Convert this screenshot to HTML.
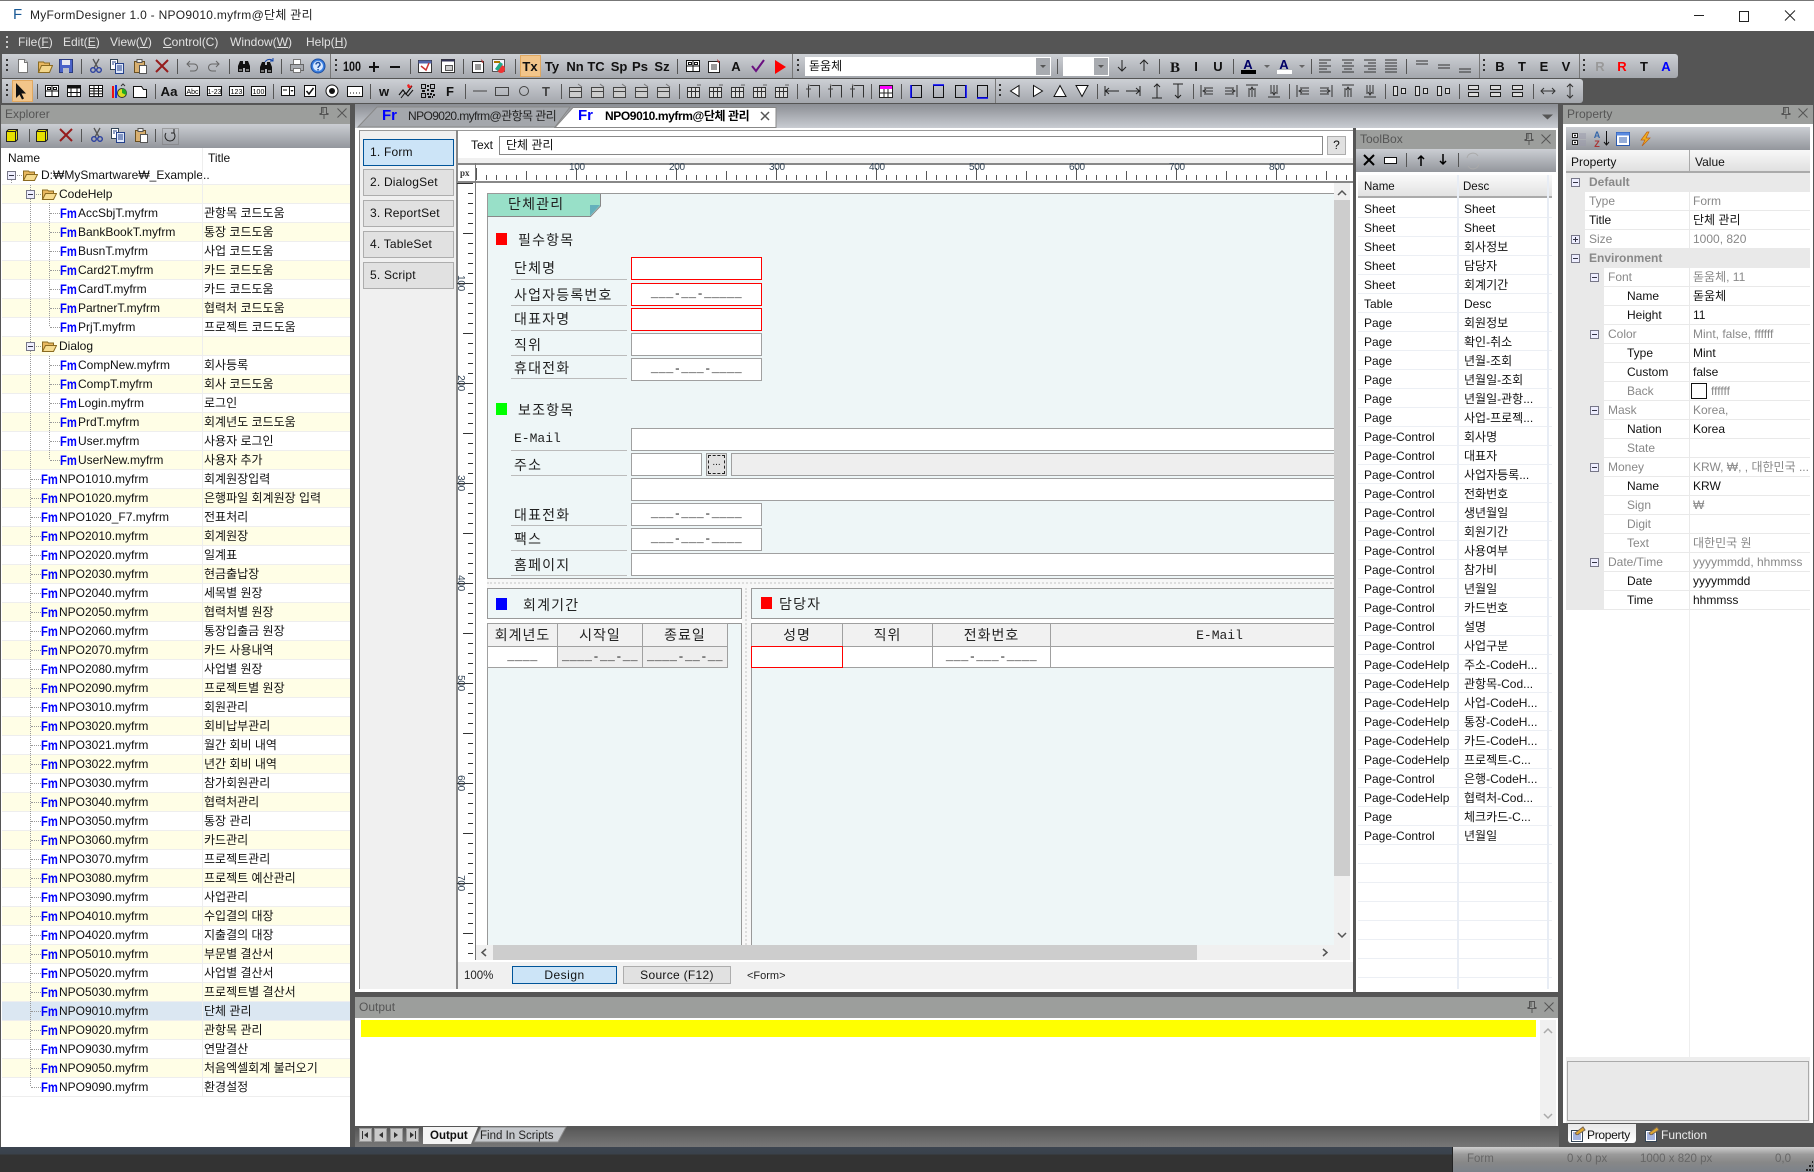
<!DOCTYPE html>
<html><head><meta charset="utf-8"><title>MyFormDesigner</title>
<style>
html,body{margin:0;padding:0}
body{width:1814px;height:1172px;position:relative;overflow:hidden;background:#555;font:12px "Liberation Sans","Noto Sans CJK KR",sans-serif;color:#111}
.a{position:absolute}
.tb{position:absolute;background:#9c9e9c;color:#555;line-height:19px;padding-left:4px;box-sizing:border-box}
.gr{position:absolute;background:linear-gradient(#cbced3,#93969c)}
.menu{position:absolute;top:35px;color:#e2e2e2;line-height:15px}
.r{height:19px;position:relative;box-sizing:border-box;border-bottom:1px solid #eee;line-height:18px;white-space:nowrap}
.r:nth-child(even){background:#fffee6}
.r.sel{background:#dbe7f2}
.r::after{content:"";position:absolute;left:202px;top:0;height:19px;width:1px;background:#eee}
.r b{position:absolute;color:#00f;font:bold 14px/18px "Liberation Sans",sans-serif;transform:scaleX(.8);transform-origin:0 0}
.r .n{position:absolute}
.r .t{position:absolute;left:204px}
.r i{position:absolute;top:9px;width:10px;border-top:1px dotted #999}
.l0 .n{left:41px}.f .n{left:59px}
.l1 b{left:41px}.l1 .n{left:59px}.l1 i{left:31px}
.l2 b{left:60px}.l2 .n{left:78px}.l2 i{left:50px}
.btn{position:absolute;box-sizing:border-box;background:#e1e1e1;border:1px solid #adadad;text-align:center}
.lt{left:363px;width:91px;height:27px;line-height:25px;text-align:left;padding-left:6px;font-size:12px;letter-spacing:.2px}
.on{background:#cce4f7;border-color:#005499}
.rl{position:absolute;font:10px/10px "Liberation Sans",sans-serif;color:#345;letter-spacing:-.3px}
.fld{position:absolute;box-sizing:border-box;background:#fff;border:1px solid #a0a0a0;text-align:center;font:12px/21px "Liberation Mono",monospace;letter-spacing:.4px;white-space:nowrap;overflow:hidden}
.red{border-color:#f00}
.dis{background:#eee}
.ln{position:absolute;height:1px;background:#bbb;left:511px;width:116px}
.lb{position:absolute;font:14px/20px "Liberation Sans","Noto Sans CJK KR",sans-serif;letter-spacing:1.2px;color:#222;white-space:nowrap}
.sq{position:absolute;width:11px;height:12px}
.hd{position:absolute;box-sizing:border-box;background:#f1f1f1;border:1px solid #a0a0a0;border-left:0;text-align:center;font:14px/23px "Liberation Sans","Noto Sans CJK KR",sans-serif;letter-spacing:1px;color:#222;height:24px;white-space:nowrap}
.tr{height:19px;position:relative;line-height:18px;white-space:nowrap}
.tr span{position:absolute;left:6px}
.tr em{position:absolute;left:106px;font-style:normal}
.p{position:relative;height:19px;background:#e9e9e9;line-height:18px;white-space:nowrap}
.p::before{content:"";position:absolute;top:0;height:18px;right:0;left:38px;background:#fff}
.p.a1::before{left:19px}
.p.g::before{display:none}
.p::after{content:"";position:absolute;left:123px;top:0;height:19px;width:1px;background:#e9e9e9}
.p.g::after{display:none}
.p span{position:absolute;left:42px}
.p.a1 span{left:23px}
.p.a3 span{left:61px}
.p.g span{left:23px;font-weight:bold;color:#888}
.p em{position:absolute;left:127px;font-style:normal}
.d span,.d em{color:#888}
.p.e span{color:#111}
.p.k em{color:#888}
.s{font-family:"Liberation Sans","Noto Sans CJK KR",sans-serif}
.tt{font:bold 13px "Liberation Sans",sans-serif;fill:#111;text-anchor:middle}
</style></head><body>

<!-- title bar -->
<div class="a" style="left:0;top:0;width:1814px;height:31px;background:#fff;border-top:1px solid #777;box-sizing:border-box"></div>
<div class="a" style="left:13px;top:6px;font:15px/18px 'Liberation Sans',sans-serif;color:#1a5a96">F</div>
<div class="a" style="left:30px;top:7px;line-height:16px;color:#222;white-space:nowrap;letter-spacing:.28px">MyFormDesigner 1.0 - NPO9010.myfrm@단체 관리</div>

<!-- menu -->
<div class="menu" style="left:18px">File(<u>F</u>)</div>
<div class="menu" style="left:63px">Edit(<u>E</u>)</div>
<div class="menu" style="left:110px">View(<u>V</u>)</div>
<div class="menu" style="left:163px"><u>C</u>ontrol(C)</div>
<div class="menu" style="left:230px">Window(<u>W</u>)</div>
<div class="menu" style="left:306px">Help(<u>H</u>)</div>

<!-- toolbars -->
<div class="a" style="left:2px;top:54px;width:1676px;height:24px;background:linear-gradient(#cdd0d5,#a4a7ad);border-radius:0 3px 3px 0"></div>
<div class="a" style="left:2px;top:79px;width:1581px;height:24px;background:linear-gradient(#cdd0d5,#a4a7ad);border-radius:0 3px 3px 0"></div>

<!-- Explorer -->
<div class="a" style="left:1px;top:105px;width:349px;height:1042px;background:#fff"></div>
<div class="tb" style="left:1px;top:105px;width:349px;height:19px">Explorer</div>
<div class="gr" style="left:1px;top:124px;width:349px;height:24px"></div>
<div class="a" style="left:8px;top:150px;line-height:16px">Name</div>
<div class="a" style="left:208px;top:150px;line-height:16px">Title</div>
<div class="a" style="left:202px;top:148px;width:1px;height:18px;background:#eee"></div>
<div class="a" style="left:0;top:166px;width:350px;clip-path:inset(0 0 0 2px)">
<div class="r l0"><span class="n">D:₩MySmartware₩_Example..</span></div>
<div class="r f"><span class="n">CodeHelp</span></div>
<div class="r l2"><i></i><b>Fm</b><span class="n">AccSbjT.myfrm</span><span class="t">관항목 코드도움</span></div>
<div class="r l2"><i></i><b>Fm</b><span class="n">BankBookT.myfrm</span><span class="t">통장 코드도움</span></div>
<div class="r l2"><i></i><b>Fm</b><span class="n">BusnT.myfrm</span><span class="t">사업 코드도움</span></div>
<div class="r l2"><i></i><b>Fm</b><span class="n">Card2T.myfrm</span><span class="t">카드 코드도움</span></div>
<div class="r l2"><i></i><b>Fm</b><span class="n">CardT.myfrm</span><span class="t">카드 코드도움</span></div>
<div class="r l2"><i></i><b>Fm</b><span class="n">PartnerT.myfrm</span><span class="t">협력처 코드도움</span></div>
<div class="r l2"><i></i><b>Fm</b><span class="n">PrjT.myfrm</span><span class="t">프로젝트 코드도움</span></div>
<div class="r f"><span class="n">Dialog</span></div>
<div class="r l2"><i></i><b>Fm</b><span class="n">CompNew.myfrm</span><span class="t">회사등록</span></div>
<div class="r l2"><i></i><b>Fm</b><span class="n">CompT.myfrm</span><span class="t">회사 코드도움</span></div>
<div class="r l2"><i></i><b>Fm</b><span class="n">Login.myfrm</span><span class="t">로그인</span></div>
<div class="r l2"><i></i><b>Fm</b><span class="n">PrdT.myfrm</span><span class="t">회계년도 코드도움</span></div>
<div class="r l2"><i></i><b>Fm</b><span class="n">User.myfrm</span><span class="t">사용자 로그인</span></div>
<div class="r l2"><i></i><b>Fm</b><span class="n">UserNew.myfrm</span><span class="t">사용자 추가</span></div>
<div class="r l1"><i></i><b>Fm</b><span class="n">NPO1010.myfrm</span><span class="t">회계원장입력</span></div>
<div class="r l1"><i></i><b>Fm</b><span class="n">NPO1020.myfrm</span><span class="t">은행파일 회계원장 입력</span></div>
<div class="r l1"><i></i><b>Fm</b><span class="n">NPO1020_F7.myfrm</span><span class="t">전표처리</span></div>
<div class="r l1"><i></i><b>Fm</b><span class="n">NPO2010.myfrm</span><span class="t">회계원장</span></div>
<div class="r l1"><i></i><b>Fm</b><span class="n">NPO2020.myfrm</span><span class="t">일계표</span></div>
<div class="r l1"><i></i><b>Fm</b><span class="n">NPO2030.myfrm</span><span class="t">현금출납장</span></div>
<div class="r l1"><i></i><b>Fm</b><span class="n">NPO2040.myfrm</span><span class="t">세목별 원장</span></div>
<div class="r l1"><i></i><b>Fm</b><span class="n">NPO2050.myfrm</span><span class="t">협력처별 원장</span></div>
<div class="r l1"><i></i><b>Fm</b><span class="n">NPO2060.myfrm</span><span class="t">통장입출금 원장</span></div>
<div class="r l1"><i></i><b>Fm</b><span class="n">NPO2070.myfrm</span><span class="t">카드 사용내역</span></div>
<div class="r l1"><i></i><b>Fm</b><span class="n">NPO2080.myfrm</span><span class="t">사업별 원장</span></div>
<div class="r l1"><i></i><b>Fm</b><span class="n">NPO2090.myfrm</span><span class="t">프로젝트별 원장</span></div>
<div class="r l1"><i></i><b>Fm</b><span class="n">NPO3010.myfrm</span><span class="t">회원관리</span></div>
<div class="r l1"><i></i><b>Fm</b><span class="n">NPO3020.myfrm</span><span class="t">회비납부관리</span></div>
<div class="r l1"><i></i><b>Fm</b><span class="n">NPO3021.myfrm</span><span class="t">월간 회비 내역</span></div>
<div class="r l1"><i></i><b>Fm</b><span class="n">NPO3022.myfrm</span><span class="t">년간 회비 내역</span></div>
<div class="r l1"><i></i><b>Fm</b><span class="n">NPO3030.myfrm</span><span class="t">참가회원관리</span></div>
<div class="r l1"><i></i><b>Fm</b><span class="n">NPO3040.myfrm</span><span class="t">협력처관리</span></div>
<div class="r l1"><i></i><b>Fm</b><span class="n">NPO3050.myfrm</span><span class="t">통장 관리</span></div>
<div class="r l1"><i></i><b>Fm</b><span class="n">NPO3060.myfrm</span><span class="t">카드관리</span></div>
<div class="r l1"><i></i><b>Fm</b><span class="n">NPO3070.myfrm</span><span class="t">프로젝트관리</span></div>
<div class="r l1"><i></i><b>Fm</b><span class="n">NPO3080.myfrm</span><span class="t">프로젝트 예산관리</span></div>
<div class="r l1"><i></i><b>Fm</b><span class="n">NPO3090.myfrm</span><span class="t">사업관리</span></div>
<div class="r l1"><i></i><b>Fm</b><span class="n">NPO4010.myfrm</span><span class="t">수입결의 대장</span></div>
<div class="r l1"><i></i><b>Fm</b><span class="n">NPO4020.myfrm</span><span class="t">지출결의 대장</span></div>
<div class="r l1"><i></i><b>Fm</b><span class="n">NPO5010.myfrm</span><span class="t">부문별 결산서</span></div>
<div class="r l1"><i></i><b>Fm</b><span class="n">NPO5020.myfrm</span><span class="t">사업별 결산서</span></div>
<div class="r l1"><i></i><b>Fm</b><span class="n">NPO5030.myfrm</span><span class="t">프로젝트별 결산서</span></div>
<div class="r l1 sel"><i></i><b>Fm</b><span class="n">NPO9010.myfrm</span><span class="t">단체 관리</span></div>
<div class="r l1"><i></i><b>Fm</b><span class="n">NPO9020.myfrm</span><span class="t">관항목 관리</span></div>
<div class="r l1"><i></i><b>Fm</b><span class="n">NPO9030.myfrm</span><span class="t">연말결산</span></div>
<div class="r l1"><i></i><b>Fm</b><span class="n">NPO9050.myfrm</span><span class="t">처음엑셀회계 불러오기</span></div>
<div class="r l1"><i></i><b>Fm</b><span class="n">NPO9090.myfrm</span><span class="t">환경설정</span></div>
</div>

<!-- center document -->
<div class="a" style="left:355px;top:104px;width:1203px;height:24px;background:linear-gradient(#8b8e94,#c9ccd2)"></div>
<svg class="a" style="left:355px;top:104px" width="430" height="24"><polygon points="3,23 22,3 215,3 200,23" fill="#a4a7ac" stroke="#888"/><polygon points="200,23.5 218,3.5 421,3.5 421,23.5" fill="#fff" stroke="#888"/></svg>
<div class="a" style="left:382px;top:107px;font:bold 15px/18px 'Liberation Sans',sans-serif;color:#00f">Fr</div>
<div class="a" style="left:408px;top:108px;line-height:16px;color:#222;white-space:nowrap;letter-spacing:-.6px">NPO9020.myfrm@관항목 관리</div>
<div class="a" style="left:578px;top:107px;font:bold 15px/18px 'Liberation Sans',sans-serif;color:#00f">Fr</div>
<div class="a" style="left:605px;top:108px;line-height:16px;color:#000;white-space:nowrap;font-weight:bold;letter-spacing:-.4px">NPO9010.myfrm@단체 관리</div>

<div class="a" style="left:355px;top:128px;width:998px;height:864px;background:#fff"></div>
<div class="a" style="left:359px;top:130px;width:97px;height:859px;background:#f0f0f0;border-left:1px solid #888;border-top:1px solid #999;box-sizing:border-box"></div>
<div class="a" style="left:456px;top:130px;width:2px;height:859px;background:#888"></div>
<div class="a" style="left:458px;top:130px;width:895px;height:1px;background:#999"></div>
<div class="a" style="left:458px;top:158px;width:895px;height:5px;background:#f0f0f0"></div>
<div class="btn lt on" style="top:139px">1. Form</div>
<div class="btn lt" style="top:169px">2. DialogSet</div>
<div class="btn lt" style="top:200px">3. ReportSet</div>
<div class="btn lt" style="top:231px">4. TableSet</div>
<div class="btn lt" style="top:262px">5. Script</div>
<div class="a" style="left:471px;top:137px;line-height:16px">Text</div>
<div class="a" style="left:499px;top:136px;width:824px;height:19px;box-sizing:border-box;border:1px solid #888;background:#fff;padding-left:6px;line-height:17px">단체 관리</div>
<div class="btn" style="left:1327px;top:136px;width:19px;height:19px;line-height:17px">?</div>

<!-- rulers -->
<div class="a" style="left:456px;top:163px;width:897px;height:2px;background:#888"></div>
<div class="a" style="left:456px;top:181px;width:897px;height:2px;background:#888"></div>
<div class="a" style="left:475px;top:163px;width:1px;height:797px;background:#777"></div>
<div class="a" style="left:460px;top:168px;font:bold 9px/10px 'Liberation Serif',serif;color:#333">px</div>
<div class="a" style="left:476px;top:165px;width:872px;height:15px;background-image:linear-gradient(90deg,#555 1px,transparent 1px),linear-gradient(90deg,#555 1px,transparent 1px),linear-gradient(90deg,#555 1px,transparent 1px);background-size:10px 5px,50px 9px,100px 12px;background-position:0 100%;background-repeat:repeat-x"></div>
<div class="rl" style="left:569px;top:163px">100</div><div class="rl" style="left:669px;top:163px">200</div><div class="rl" style="left:769px;top:163px">300</div><div class="rl" style="left:869px;top:163px">400</div><div class="rl" style="left:969px;top:163px">500</div><div class="rl" style="left:1069px;top:163px">600</div><div class="rl" style="left:1169px;top:163px">700</div><div class="rl" style="left:1269px;top:163px">800</div>
<div class="a" style="left:456px;top:183px;width:17px;height:777px;background-image:linear-gradient(#333 1px,transparent 1px),linear-gradient(#333 1px,transparent 1px),linear-gradient(#333 1px,transparent 1px);background-size:5px 10px,10px 50px,16px 100px;background-position:100% 0;background-repeat:repeat-y"></div>
<div class="rl" style="left:452px;top:278px;transform:rotate(90deg)">100</div><div class="rl" style="left:452px;top:378px;transform:rotate(90deg)">200</div><div class="rl" style="left:452px;top:478px;transform:rotate(90deg)">300</div><div class="rl" style="left:452px;top:578px;transform:rotate(90deg)">400</div><div class="rl" style="left:452px;top:678px;transform:rotate(90deg)">500</div><div class="rl" style="left:452px;top:778px;transform:rotate(90deg)">600</div><div class="rl" style="left:452px;top:878px;transform:rotate(90deg)">700</div>

<!-- form canvas clipped -->
<div class="a" style="left:0;top:0;width:1814px;height:1172px;clip-path:inset(183px 480px 227px 476px)">
<div class="a" style="left:487px;top:193px;width:900px;height:386px;background:#eef6f7;border:1px solid #999;box-sizing:border-box"></div>
<svg class="a" style="left:487px;top:194px" width="115" height="24"><polygon points="1,0 113,0 113,12 103,22 1,22" fill="#98e0c8"/><polygon points="103,11 113,11 103,22" fill="#64b0bc"/><path d="M113.500 0V12L103.500 22.500H0" fill="none" stroke="#888"/></svg>
<div class="lb" style="left:508px;top:193px;font-size:14px;line-height:23px">단체관리</div>

<div class="sq" style="left:496px;top:233px;background:#f00"></div>
<div class="lb" style="left:518px;top:230px">필수항목</div>
<div class="lb" style="left:514px;top:258px">단체명</div><div class="ln" style="top:279px"></div>
<div class="fld red" style="left:631px;top:257px;width:131px;height:23px"></div>
<div class="lb" style="left:514px;top:285px">사업자등록번호</div><div class="ln" style="top:305px"></div>
<div class="fld red" style="left:631px;top:283px;width:131px;height:23px">___-__-_____</div>
<div class="lb" style="left:514px;top:309px">대표자명</div><div class="ln" style="top:330px"></div>
<div class="fld red" style="left:631px;top:308px;width:131px;height:23px"></div>
<div class="lb" style="left:514px;top:335px">직위</div><div class="ln" style="top:355px"></div>
<div class="fld" style="left:631px;top:333px;width:131px;height:23px"></div>
<div class="lb" style="left:514px;top:358px">휴대전화</div><div class="ln" style="top:378px"></div>
<div class="fld" style="left:631px;top:358px;width:131px;height:23px">___-___-____</div>

<div class="sq" style="left:496px;top:403px;background:#0f0"></div>
<div class="lb" style="left:518px;top:400px">보조항목</div>
<div class="lb" style="left:514px;top:429px;font-family:'Liberation Mono',monospace;font-size:13px;letter-spacing:0">E-Mail</div><div class="ln" style="top:450px"></div>
<div class="fld" style="left:631px;top:428px;width:800px;height:23px"></div>
<div class="lb" style="left:514px;top:455px">주소</div><div class="ln" style="top:475px"></div>
<div class="fld" style="left:631px;top:453px;width:71px;height:23px"></div>
<div class="btn" style="left:706px;top:453px;width:21px;height:23px;line-height:18px;background:#e1e1e1;border-color:#999;outline:1px dashed #222;outline-offset:-3px;font-size:10px">...</div>
<div class="fld dis" style="left:731px;top:453px;width:700px;height:23px"></div>
<div class="fld" style="left:631px;top:478px;width:800px;height:23px"></div>
<div class="lb" style="left:514px;top:505px">대표전화</div><div class="ln" style="top:525px"></div>
<div class="fld" style="left:631px;top:503px;width:131px;height:23px">___-___-____</div>
<div class="lb" style="left:514px;top:529px">팩스</div><div class="ln" style="top:550px"></div>
<div class="fld" style="left:631px;top:528px;width:131px;height:23px">___-___-____</div>
<div class="lb" style="left:514px;top:555px">홈페이지</div><div class="ln" style="top:575px"></div>
<div class="fld" style="left:631px;top:553px;width:800px;height:23px"></div>

<div class="a" style="left:487px;top:579px;width:900px;height:9px;background:#f7f7f7;border-top:0"></div>
<div class="a" style="left:487px;top:582px;width:900px;border-top:2px dotted #ddd"></div>
<div class="a" style="left:742px;top:588px;width:9px;height:360px;background:#f7f7f7"></div>
<div class="a" style="left:745px;top:588px;height:360px;border-left:2px dotted #ddd"></div>

<div class="a" style="left:487px;top:588px;width:255px;height:31px;background:#eef6f7;border:1px solid #999;box-sizing:border-box"></div>
<div class="sq" style="left:496px;top:598px;background:#00f"></div>
<div class="lb" style="left:523px;top:595px">회계기간</div>
<div class="a" style="left:751px;top:588px;width:700px;height:31px;background:#eef6f7;border:1px solid #999;box-sizing:border-box"></div>
<div class="sq" style="left:761px;top:597px;background:#f00"></div>
<div class="lb" style="left:779px;top:594px">담당자</div>

<div class="a" style="left:487px;top:623px;width:255px;height:330px;background:#eef6f7;border:1px solid #999;box-sizing:border-box"></div>
<div class="a" style="left:751px;top:623px;width:700px;height:330px;background:#eef6f7;border:1px solid #999;box-sizing:border-box"></div>

<div class="hd" style="left:487px;top:623px;width:71px;border-left:1px solid #a0a0a0">회계년도</div>
<div class="hd" style="left:558px;top:623px;width:85px">시작일</div>
<div class="hd" style="left:643px;top:623px;width:85px">종료일</div>
<div class="fld" style="left:487px;top:646px;width:71px;height:22px;line-height:20px">____</div>
<div class="fld dis" style="left:557px;top:646px;width:86px;height:22px;line-height:20px">____-__-__</div>
<div class="fld dis" style="left:642px;top:646px;width:86px;height:22px;line-height:20px">____-__-__</div>

<div class="hd" style="left:751px;top:623px;width:92px;border-left:1px solid #a0a0a0">성명</div>
<div class="hd" style="left:843px;top:623px;width:90px">직위</div>
<div class="hd" style="left:933px;top:623px;width:118px">전화번호</div>
<div class="hd" style="left:1051px;top:623px;width:338px;font-family:'Liberation Mono',monospace;font-size:13px;letter-spacing:0">E-Mail</div>
<div class="fld" style="left:842px;top:646px;width:91px;height:22px"></div>
<div class="fld" style="left:932px;top:646px;width:119px;height:22px;line-height:20px">___-___-____</div>
<div class="fld" style="left:1050px;top:646px;width:339px;height:22px"></div>
<div class="fld red" style="left:751px;top:646px;width:92px;height:22px"></div>
</div>

<!-- form scrollbars -->
<div class="a" style="left:1334px;top:183px;width:16px;height:762px;background:#f0f0f0"></div>
<div class="a" style="left:1334px;top:200px;width:16px;height:676px;background:#cdcdcd"></div>
<div class="a" style="left:476px;top:945px;width:874px;height:15px;background:#f0f0f0"></div>
<div class="a" style="left:493px;top:945px;width:704px;height:15px;background:#cdcdcd"></div>
<div class="a" style="left:458px;top:962px;width:895px;height:27px;background:#f0f0f0"></div>
<div class="a" style="left:464px;top:968px;line-height:16px;font-size:11.500px;color:#222">100%</div>
<div class="btn on" style="left:512px;top:966px;width:105px;height:18px;line-height:16px;letter-spacing:.5px">Design</div>
<div class="btn" style="left:623px;top:966px;width:108px;height:18px;line-height:16px;letter-spacing:.3px">Source (F12)</div>
<div class="a" style="left:747px;top:968px;line-height:16px;font-size:11px;color:#222">&lt;Form&gt;</div>

<!-- toolbox -->
<div class="a" style="left:1353px;top:128px;width:3px;height:862px;background:#555"></div>
<div class="a" style="left:1356px;top:128px;width:202px;height:864px;background:#fff"></div>
<div class="tb" style="left:1356px;top:130px;width:200px;height:19px">ToolBox</div>
<div class="gr" style="left:1356px;top:149px;width:200px;height:23px"></div>
<div class="a" style="left:1358px;top:175px;width:194px;height:23px;background:linear-gradient(#fafafa,#e2e2e2);border-bottom:2px solid #aaa;box-sizing:border-box"></div>
<div class="a" style="left:1364px;top:179px;line-height:17px;font-size:11.500px">Name</div>
<div class="a" style="left:1463px;top:179px;line-height:17px;font-size:11.500px">Desc</div>
<div class="a" style="left:1358px;top:199px;width:194px;height:790px;background:repeating-linear-gradient(#fff 0 18px,#eceff4 18px 19px)"></div>
<div class="a" style="left:1457px;top:175px;width:2px;height:814px;background:#e8edf5"></div>
<div class="a" style="left:1547px;top:175px;width:2px;height:814px;background:#e8edf5"></div>
<div class="a" style="left:1358px;top:200px;width:194px">
<div class="tr"><span>Sheet</span><em>Sheet</em></div>
<div class="tr"><span>Sheet</span><em>Sheet</em></div>
<div class="tr"><span>Sheet</span><em>회사정보</em></div>
<div class="tr"><span>Sheet</span><em>담당자</em></div>
<div class="tr"><span>Sheet</span><em>회계기간</em></div>
<div class="tr"><span>Table</span><em>Desc</em></div>
<div class="tr"><span>Page</span><em>회원정보</em></div>
<div class="tr"><span>Page</span><em>확인-취소</em></div>
<div class="tr"><span>Page</span><em>년월-조회</em></div>
<div class="tr"><span>Page</span><em>년월일-조회</em></div>
<div class="tr"><span>Page</span><em>년월일-관항...</em></div>
<div class="tr"><span>Page</span><em>사업-프로젝...</em></div>
<div class="tr"><span>Page-Control</span><em>회사명</em></div>
<div class="tr"><span>Page-Control</span><em>대표자</em></div>
<div class="tr"><span>Page-Control</span><em>사업자등록...</em></div>
<div class="tr"><span>Page-Control</span><em>전화번호</em></div>
<div class="tr"><span>Page-Control</span><em>생년월일</em></div>
<div class="tr"><span>Page-Control</span><em>회원기간</em></div>
<div class="tr"><span>Page-Control</span><em>사용여부</em></div>
<div class="tr"><span>Page-Control</span><em>참가비</em></div>
<div class="tr"><span>Page-Control</span><em>년월일</em></div>
<div class="tr"><span>Page-Control</span><em>카드번호</em></div>
<div class="tr"><span>Page-Control</span><em>설명</em></div>
<div class="tr"><span>Page-Control</span><em>사업구분</em></div>
<div class="tr"><span>Page-CodeHelp</span><em>주소-CodeH...</em></div>
<div class="tr"><span>Page-CodeHelp</span><em>관항목-Cod...</em></div>
<div class="tr"><span>Page-CodeHelp</span><em>사업-CodeH...</em></div>
<div class="tr"><span>Page-CodeHelp</span><em>통장-CodeH...</em></div>
<div class="tr"><span>Page-CodeHelp</span><em>카드-CodeH...</em></div>
<div class="tr"><span>Page-CodeHelp</span><em>프로젝트-C...</em></div>
<div class="tr"><span>Page-Control</span><em>은행-CodeH...</em></div>
<div class="tr"><span>Page-CodeHelp</span><em>협력처-Cod...</em></div>
<div class="tr"><span>Page</span><em>체크카드-C...</em></div>
<div class="tr"><span>Page-Control</span><em>년월일</em></div>
</div>

<!-- Property -->
<div class="a" style="left:1563px;top:105px;width:250px;height:1018px;background:#fff"></div>
<div class="tb" style="left:1563px;top:105px;width:250px;height:19px">Property</div>
<div class="gr" style="left:1566px;top:127px;width:244px;height:23px"></div>
<div class="a" style="left:1566px;top:150px;width:244px;height:23px;background:linear-gradient(#f8f8f8,#e0e0e0);border-bottom:2px solid #aaa;box-sizing:border-box"></div>
<div class="a" style="left:1571px;top:154px;line-height:16px">Property</div>
<div class="a" style="left:1695px;top:154px;line-height:16px">Value</div>
<div class="a" style="left:1689px;top:150px;width:1px;height:23px;background:#aaa"></div>
<div class="a" style="left:1566px;top:173px;width:244px">
<div class="p g"><span>Default</span></div>
<div class="p a1 d"><span>Type</span><em>Form</em></div>
<div class="p a1"><span>Title</span><em>단체 관리</em></div>
<div class="p a1 d"><span>Size</span><em>1000, 820</em></div>
<div class="p g"><span>Environment</span></div>
<div class="p a2 d"><span>Font</span><em>돋움체, 11</em></div>
<div class="p a3"><span>Name</span><em>돋움체</em></div>
<div class="p a3"><span>Height</span><em>11</em></div>
<div class="p a2 d"><span>Color</span><em>Mint, false, ffffff</em></div>
<div class="p a3"><span>Type</span><em>Mint</em></div>
<div class="p a3"><span>Custom</span><em>false</em></div>
<div class="p a3 d"><span>Back</span><em style="left:145px">ffffff</em><i class="a" style="left:125px;top:1px;width:14px;height:14px;border:1px solid #111;background:#fff"></i></div>
<div class="p a2 d"><span>Mask</span><em>Korea,</em></div>
<div class="p a3"><span>Nation</span><em>Korea</em></div>
<div class="p a3 d"><span>State</span></div>
<div class="p a2 d"><span>Money</span><em>KRW, ₩, , 대한민국 ...</em></div>
<div class="p a3"><span>Name</span><em>KRW</em></div>
<div class="p a3 d"><span>Sign</span><em>₩</em></div>
<div class="p a3 d"><span>Digit</span></div>
<div class="p a3 d"><span>Text</span><em>대한민국 원</em></div>
<div class="p a2 d"><span>Date/Time</span><em>yyyymmdd, hhmmss</em></div>
<div class="p a3"><span>Date</span><em>yyyymmdd</em></div>
<div class="p a3"><span>Time</span><em>hhmmss</em></div>
</div>
<div class="a" style="left:1689px;top:610px;width:1px;height:447px;background:#eee"></div>
<div class="a" style="left:1566px;top:1057px;width:244px;height:66px;background:#eee"></div>
<div class="a" style="left:1567px;top:1061px;width:242px;height:60px;box-sizing:border-box;background:#e9e9e9;border:1px solid #aaa"></div>
<div class="a" style="left:1568px;top:1124px;width:68px;height:19px;background:linear-gradient(#e8e8e8,#fff);border-radius:0 0 3px 3px"></div>
<div class="a" style="left:1587px;top:1127px;line-height:16px;color:#111;letter-spacing:-.3px">Property</div>
<div class="a" style="left:1661px;top:1127px;line-height:16px;color:#eee">Function</div>

<!-- Output -->
<div class="a" style="left:355px;top:992px;width:1208px;height:5px;background:#555"></div>
<div class="a" style="left:355px;top:997px;width:1203px;height:129px;background:#fff"></div>
<div class="tb" style="left:355px;top:997px;width:1203px;height:21px;line-height:20px;padding-left:4px">Output</div>
<div class="a" style="left:361px;top:1020px;width:1175px;height:17px;background:#ff0"></div>
<div class="a" style="left:1540px;top:1020px;width:16px;height:106px;background:#f0f0f0"></div>
<div class="a" style="left:355px;top:1126px;width:1204px;height:21px;background:linear-gradient(#555,#777)"></div>
<svg class="a" style="left:423px;top:1126px" width="150" height="20"><polygon points="51,16 58,1 143,1 135,16" fill="#c5c8cc" stroke="#888"/><polygon points="0,1 55,1 48,18 0,18" fill="#f4f4f4"/></svg>
<div class="a" style="left:430px;top:1128px;line-height:16px;font-weight:bold;font-size:11.500px;color:#111">Output</div>
<div class="a" style="left:480px;top:1128px;line-height:16px;font-size:11.500px;color:#222">Find In Scripts</div>

<!-- bottom status -->
<div class="a" style="left:0;top:1147px;width:1452px;height:25px;background:linear-gradient(#3c4550 0,#3a424c 7px,#333 8px)"></div>
<div class="a" style="left:1452px;top:1147px;width:362px;height:25px;background:linear-gradient(#cfcfcf,#9a9a9a 30%,#888 60%,#7c828a);border-left:1px solid #222;box-sizing:border-box"></div>
<div class="a" style="left:1467px;top:1151px;line-height:16px;color:#666;font-size:11.500px">Form</div>
<div class="a" style="left:1567px;top:1151px;line-height:16px;color:#666;font-size:11.500px">0 x 0 px</div>
<div class="a" style="left:1640px;top:1151px;line-height:16px;color:#666;font-size:11.500px">1000 x 820 px</div>
<div class="a" style="left:1775px;top:1151px;line-height:16px;color:#666;font-size:11.500px">0,0</div>

<!-- icon overlay -->
<svg class="a" style="left:0;top:0" width="1814" height="1172" viewBox="0 0 1814 1172">
<defs>
<symbol id="new" viewBox="0 0 16 16"><path d="M3.500 1.500h6l3 3v10h-9z" fill="#fff" stroke="#777"/><path d="M9.500 1.500v3h3" fill="#ddd" stroke="#777"/></symbol>
<symbol id="open" viewBox="0 0 16 16"><path d="M1.500 14V4h5l1 1h5v3" fill="#e8b860" stroke="#8a6a20"/><path d="M1.500 14.500l3-7h11l-3 7z" fill="#f3d68a" stroke="#8a6a20"/></symbol>
<symbol id="save" viewBox="0 0 16 16"><path d="M1.500 1.500h13v13h-13z" fill="#4a62c8" stroke="#2a3a80"/><rect x="4" y="2" width="8" height="5" fill="#e8e8f0"/><rect x="5" y="10" width="6" height="5" fill="#b8bcc8"/></symbol>
<symbol id="cut" viewBox="0 0 16 16"><path d="M5 1l5 9M11 1l-5 9" stroke="#555" fill="none" stroke-width="1.300"/><circle cx="5" cy="12" r="2.300" fill="none" stroke="#2a3fa0" stroke-width="1.400"/><circle cx="11" cy="12" r="2.300" fill="none" stroke="#2a3fa0" stroke-width="1.400"/></symbol>
<symbol id="copy" viewBox="0 0 16 16"><path d="M1.500 1.500h7v10h-7z" fill="#fff" stroke="#345"/><path d="M6.500 5.500h8v10h-8z" fill="#dfe8fa" stroke="#23408a"/><path d="M8 8h5M8 10h5M8 12h5M3 4h4M3 6h2" stroke="#23408a"/></symbol>
<symbol id="paste" viewBox="0 0 16 16"><path d="M2.500 3.500h10v11h-10z" fill="#d9b070" stroke="#6a5020"/><path d="M5 1.500h5v3H5z" fill="#eee" stroke="#555"/><path d="M7.500 7.500h7v8h-7z" fill="#fff" stroke="#555"/></symbol>
<symbol id="xred" viewBox="0 0 16 16"><path d="M2 2l12 12M14 2L2 14" stroke="#961c1c" stroke-width="2" fill="none"/></symbol>
<symbol id="undo" viewBox="0 0 16 16"><path d="M3 6h7a3.500 3.500 0 0 1 0 7H6M6 3L3 6l3 3" stroke="#666" fill="none"/></symbol>
<symbol id="redo" viewBox="0 0 16 16"><path d="M13 6H6a3.500 3.500 0 0 0 0 7h4M10 3l3 3-3 3" stroke="#666" fill="none"/></symbol>
<symbol id="bino" viewBox="0 0 16 16"><path d="M2 14V8l2-5h3v11zM14 14V8l-2-5H9v11zM7 6h2v4H7z" fill="#111"/><rect x="3" y="11" width="3" height="2" fill="#777"/><rect x="10" y="11" width="3" height="2" fill="#777"/></symbol>
<symbol id="print" viewBox="0 0 16 16"><path d="M4.500 1.500h7v5h-7z" fill="#fff" stroke="#777"/><path d="M1.500 6.500h13v6h-13z" fill="#a8abb0" stroke="#666"/><path d="M4.500 10.500h7v4h-7z" fill="#fff" stroke="#777"/></symbol>
<symbol id="help" viewBox="0 0 16 16"><circle cx="8" cy="8" r="7" fill="#3b7fe0" stroke="#1c4da0"/><circle cx="8" cy="8" r="5" fill="#d8e8ff"/><path d="M6 6.500a2 2 0 1 1 3 1.700c-.800.500-1 .8-1 1.800" stroke="#1c4da0" fill="none" stroke-width="1.400"/><rect x="7.300" y="11" width="1.500" height="1.500" fill="#1c4da0"/></symbol>
<symbol id="form" viewBox="0 0 16 16"><path d="M1.500 2.500h13v12h-13z" fill="#fff" stroke="#333"/><path d="M1.500 2.500h13v3h-13z" fill="#5566aa"/><path d="M4 8l5 4 3-7" stroke="#c33" fill="none" stroke-width="1.500"/></symbol>
<symbol id="win" viewBox="0 0 16 16"><path d="M1.500 1.500h13v13h-13z" fill="#fff" stroke="#333"/><path d="M1.500 1.500h13v2h-13z" fill="#335"/><path d="M5.500 7.500h7v5h-7z" fill="#ccc" stroke="#555"/></symbol>
<symbol id="sheet" viewBox="0 0 16 16"><path d="M2.500 3.500h11v11h-11z" fill="#fff" stroke="#222"/><path d="M5 7h6M5 9h6M5 11h6" stroke="#333"/><path d="M11 1l3 3-2 1z" fill="#a33"/></symbol>
<symbol id="color" viewBox="0 0 16 16"><path d="M1.500 1.500h12v12h-12z" fill="#f4f4ff" stroke="#555"/><circle cx="10" cy="11" r="4" fill="#e33"/><path d="M4 11l5-7 3 2-5 7z" fill="#2a8"/><path d="M3 4h6" stroke="#a70" stroke-width="2"/></symbol>
<symbol id="g1" viewBox="0 0 16 16"><path d="M1.500 2.500h13v11h-13z" fill="#fff" stroke="#111"/><path d="M8 2.500v11M1.500 8h13" stroke="#111"/><rect x="3.500" y="4.500" width="3" height="2" fill="none" stroke="#111"/><rect x="9.500" y="4.500" width="3" height="2" fill="none" stroke="#111"/></symbol>
<symbol id="g2" viewBox="0 0 16 16"><path d="M1.500 2.500h13v11h-13z" fill="#fff" stroke="#111"/><path d="M1.500 2.500h13v3h-13z" fill="#111"/><path d="M5 5v8M11 5v8M1.500 9.500h13" stroke="#111"/></symbol>
<symbol id="g3" viewBox="0 0 16 16"><path d="M1.500 2.500h13v11h-13z" fill="#fff" stroke="#111"/><path d="M1.500 5.500h13M1.500 8h13M1.500 10.800h13M6 2.500v11M10.500 2.500v11" stroke="#111"/></symbol>
<symbol id="chart" viewBox="0 0 16 16"><rect x="1" y="3" width="2" height="12" fill="#e11"/><rect x="4" y="2" width="2" height="13" fill="#13d"/><circle cx="11" cy="10" r="4.500" fill="#dd2" stroke="#333"/><path d="M11 10V5.500A4.500 4.500 0 0 1 15 12z" fill="#2a2"/><path d="M10 3l2-2 2 2" stroke="#333" fill="none"/></symbol>
<symbol id="tabw" viewBox="0 0 16 16"><path d="M1.500 3.500h8l2 3h3v8h-13z" fill="#fff" stroke="#111"/></symbol>
<symbol id="ed" viewBox="0 0 16 16"><path d="M1.500 3.500h13v9h-13z" fill="#fff" stroke="#111"/></symbol>
<symbol id="ck" viewBox="0 0 16 16"><path d="M2.500 2.500h11v11h-11z" fill="#fff" stroke="#111"/><path d="M4.500 8l2.500 3 4.500-6" stroke="#111" fill="none" stroke-width="1.500"/></symbol>
<symbol id="rd" viewBox="0 0 16 16"><circle cx="8" cy="8" r="6" fill="#fff" stroke="#111"/><circle cx="8" cy="8" r="3" fill="#111"/></symbol>
<symbol id="dd" viewBox="0 0 16 16"><path d="M1.500 3.500h13v9h-13z" fill="#fff" stroke="#111"/><path d="M9.500 3.500v9" stroke="#111"/><path d="M3 7h4" stroke="#111"/><path d="M10.500 7h3l-1.500 2z" fill="#111"/></symbol>
<symbol id="qr" viewBox="0 0 16 16"><path d="M1.500 1.500h4v4h-4zM10.500 1.500h4v4h-4zM1.500 10.500h4v4h-4z" fill="none" stroke="#111"/><path d="M7 2h2v2H7zM7 6h2v2H7zM2 7h3v2H2zM11 7h3v2h-3zM7 10h2v2H7zM10 10h2v2h-2zM13 11h2v2h-2zM8 13h3v2H8zM12 13h1v2h-1z" fill="#111"/></symbol>
<symbol id="spark" viewBox="0 0 16 16"><path d="M1 12l4-5 3 4 6-8" stroke="#111" fill="none" stroke-width="1.200"/><path d="M3 15l4-5 3 3 5-6" stroke="#111" fill="none"/><path d="M9 2l2-1 1 2 2-1-1 3-3 0z" fill="#e22"/></symbol>
<symbol id="tb1" viewBox="0 0 16 16"><path d="M1.500 4.500h12v10h-12z" fill="#ccc" stroke="#444"/><path d="M1.500 8.500h12" stroke="#444"/><path d="M10 1l4 3" stroke="#777"/></symbol>
<symbol id="tg" viewBox="0 0 16 16"><path d="M1.500 4.500h12v10h-12zM5.500 4.500v10M9.500 4.500v10M1.500 8.500h12" fill="#ddd" stroke="#333"/><path d="M11 2h4" stroke="#666"/></symbol>
<symbol id="col" viewBox="0 0 16 16"><path d="M3.500 2.500h11v12M3.500 2.500v12" fill="none" stroke="#333"/><path d="M1 6h5" stroke="#444"/><path d="M3 1l2 2" stroke="#888"/></symbol>
<symbol id="mg" viewBox="0 0 16 16"><path d="M1.500 2.500h13v12h-13z" fill="#fff" stroke="#222"/><rect x="2" y="3" width="12" height="3" fill="#f0f"/><path d="M6 6v8M10 6v8M1.500 10h13" stroke="#222"/></symbol>
<symbol id="tl" viewBox="0 0 16 16"><path d="M12.500 8 L4 2.500v11z" transform="matrix(-1 0 0 1 16 0)" fill="#fff" stroke="#111"/></symbol>
<symbol id="tr" viewBox="0 0 16 16"><path d="M12.500 8L3.500 2.500v11z" fill="#fff" stroke="#111"/></symbol>
<symbol id="tu" viewBox="0 0 16 16"><path d="M8 2.500l6 11H2z" fill="#fff" stroke="#111"/></symbol>
<symbol id="td" viewBox="0 0 16 16"><path d="M8 13.500l6-11H2z" fill="#fff" stroke="#111"/></symbol>
<symbol id="lgt" viewBox="0 0 16 16"><path d="M1 3v10M1 8h14M5 5L1.500 8 5 11" fill="none" stroke="#222"/></symbol>
<symbol id="rgt" viewBox="0 0 16 16"><path d="M15 3v10M1 8h14M11 5l3.500 3L11 11" fill="none" stroke="#222"/></symbol>
<symbol id="upa" viewBox="0 0 16 16"><path d="M3 15h10M8 15V1M5 4l3-3 3 3" fill="none" stroke="#222"/></symbol>
<symbol id="dna" viewBox="0 0 16 16"><path d="M3 1h10M8 1v14M5 12l3 3 3-3" fill="none" stroke="#222"/></symbol>
<symbol id="al1" viewBox="0 0 16 16"><path d="M2 2v12M14 5H5M14 8H5M14 11H5M7 6L4 8l3 2" fill="none" stroke="#333"/></symbol>
<symbol id="al2" viewBox="0 0 16 16"><path d="M14 2v12M2 5h9M2 8h9M2 11h9M9 6l3 2-3 2" fill="none" stroke="#333"/></symbol>
<symbol id="al3" viewBox="0 0 16 16"><path d="M2 2h12M5 14V5M8 14V5M11 14V5M6 7l2-3 2 3" fill="none" stroke="#333"/></symbol>
<symbol id="al4" viewBox="0 0 16 16"><path d="M2 14h12M5 2v9M8 2v9M11 2v9M6 9l2 3 2-3" fill="none" stroke="#333"/></symbol>
<symbol id="sp1" viewBox="0 0 16 16"><path d="M1.500 3.500h4v9h-4zM9.500 5.500h4v5h-4z" fill="#ddd" stroke="#222"/></symbol>
<symbol id="sp2" viewBox="0 0 16 16"><path d="M2.500 2.500h10v4h-10zM2.500 9.500h10v4h-10z" fill="#ddd" stroke="#222"/></symbol>
<symbol id="lr" viewBox="0 0 16 16"><path d="M1 8h14M4 5L1 8l3 3M12 5l3 3-3 3" fill="none" stroke="#333"/></symbol>
<symbol id="ud" viewBox="0 0 16 16"><path d="M8 1v14M5 4l3-3 3 3M5 12l3 3 3-3" fill="none" stroke="#333"/></symbol>
<symbol id="exm" viewBox="0 0 9 9"><rect x=".5" y=".5" width="8" height="8" fill="#eef" stroke="#778"/><path d="M2 4.500h5" stroke="#334"/></symbol>
<symbol id="exp" viewBox="0 0 9 9"><rect x=".5" y=".5" width="8" height="8" fill="#eef" stroke="#778"/><path d="M2 4.500h5M4.500 2v5" stroke="#334"/></symbol>
<symbol id="pm" viewBox="0 0 12 12"><path d="M3.500 .5h5v6h1.500v1H2v-1h1.500zM6 7.500V12M5 1v5" fill="none" stroke="#555"/></symbol>
<symbol id="cl" viewBox="0 0 12 12"><path d="M1.500 1.500l9 9M10.500 1.500l-9 9" stroke="#555" stroke-width="1"/></symbol>
<symbol id="folder" viewBox="0 0 16 16"><path d="M1.500 13V4h5l1 1h5v2" fill="#e8b860" stroke="#8a6a20"/><path d="M1.500 13.500l3-6h11l-3 6z" fill="#f6dc90" stroke="#8a6a20"/></symbol>
<symbol id="yfold" viewBox="0 0 16 16"><path d="M1.500 4.500l2-2h9v10l-2 2h-9z" fill="#e8e000" stroke="#222"/><path d="M1.500 4.500h9v10M10.500 4.500l2-2" fill="none" stroke="#222"/></symbol>
<symbol id="bolt" viewBox="0 0 16 16"><path d="M10 1L4 9h4l-3 6 8-8H9l3-6z" fill="#f0b020" stroke="#c06010" stroke-width=".7"/></symbol>
<symbol id="cats" viewBox="0 0 16 16"><path d="M1.500 2.500h5v4h-5zM1.500 9.500h5v4h-5z" fill="#fff" stroke="#222"/><path d="M3 4.500h2M4 3.500v2M3 11.500h2M4 10.500v2" stroke="#222"/><path d="M8 3h7M8 5h7M8 7h7M8 10h7M8 12h7M8 14h7" stroke="#99a" /></symbol>
<symbol id="pages" viewBox="0 0 16 16"><path d="M1.500 1.500h13v13h-13z" fill="#fff" stroke="#2a5ab0"/><path d="M1.500 1.500h13v3h-13z" fill="#5a8ae0"/><path d="M4 7h8M4 9h8M4 11h8" stroke="#2a5ab0"/></symbol>
<symbol id="propi" viewBox="0 0 16 16"><path d="M1.500 4.500h11v11h-11z" fill="#fff" stroke="#345"/><path d="M3 7h8M3 9h8M3 11h8M3 13h8" stroke="#4a6ac0"/><path d="M5 7l8-6 2 3-8 5z" fill="#e0a830" stroke="#765"/></symbol>
</defs>

<!-- window ctrl -->
<path d="M1694 15.500h10M1739.500 11.500h9v10h-9zM1785 10.500l10 10M1795 10.500l-10 10" fill="none" stroke="#222"/>
<!-- menu grip -->
<path d="M7 36v14" stroke="#ccc" stroke-width="2" stroke-dasharray="2 3"/>
<!-- grips -->
<path d="M7 59v14M336 59v14M798 59v14M1484 59v14M1584 59v14M7 84v14M1000 84v14" stroke="#333" stroke-width="2" stroke-dasharray="2 3"/>
<!-- separators -->
<path d="M81.500 59v15M177.500 59v15M229.500 59v15M281.500 59v15M410.500 59v15M463.500 59v15M515.500 59v15M677.500 59v15M1057.500 59v15M1159.500 59v15M1233.500 59v15M1311.500 59v15M1406.500 59v15M37.500 84v15M155.500 84v15M273.500 84v15M370.500 84v15M465.500 84v15M561.500 84v15M679.500 84v15M797.500 84v15M871.500 84v15M901.500 84v15M1097.500 84v15M1193.500 84v15M1289.500 84v15M1385.500 84v15M1459.500 84v15M1533.500 84v15" stroke="#555" fill="none"/>
<path d="M330.500 54v24M792.500 54v24M1479.500 54v24M1579.500 54v24M995.500 79v24" stroke="#777" fill="none"/>

<!-- toolbar1 icons -->
<use href="#new" x="15" y="58" width="16" height="16"/><use href="#open" x="37" y="58" width="16" height="16"/><use href="#save" x="58" y="58" width="16" height="16"/>
<use href="#cut" x="88" y="58" width="16" height="16"/><use href="#copy" x="109" y="58" width="16" height="16"/><use href="#paste" x="132" y="58" width="16" height="16"/><use href="#xred" x="154" y="58" width="16" height="16"/>
<use href="#undo" x="184" y="58" width="16" height="16"/><use href="#redo" x="206" y="58" width="16" height="16"/>
<use href="#bino" x="236" y="58" width="16" height="16"/><use href="#bino" x="258" y="59" width="16" height="16"/><path d="M265 62a5 5 0 0 1 8-1M273 58v3h-3" stroke="#14a" fill="none"/>
<use href="#print" x="289" y="58" width="16" height="16"/><use href="#help" x="310" y="58" width="16" height="16"/>
<text x="352" y="71" class="tt" style="font-size:14px" textLength="18" lengthAdjust="spacingAndGlyphs">100</text>
<path d="M369 67h10M374 62v10M390 67h10" stroke="#111" stroke-width="2"/>
<use href="#form" x="417" y="58" width="16" height="16"/><use href="#win" x="440" y="58" width="16" height="16"/><use href="#sheet" x="470" y="58" width="16" height="16"/><use href="#color" x="491" y="58" width="16" height="16"/>
<rect x="520.500" y="55.500" width="20" height="21" fill="#f2c58a" stroke="#e0a860"/>
<text x="530" y="71" class="tt">Tx</text><text x="552" y="71" class="tt">Ty</text><text x="575" y="71" class="tt">Nn</text><text x="596" y="71" class="tt">TC</text><text x="619" y="71" class="tt">Sp</text><text x="640" y="71" class="tt">Ps</text><text x="662" y="71" class="tt">Sz</text>
<use href="#g1" x="685" y="58" width="16" height="16"/><use href="#sheet" x="706" y="58" width="16" height="16"/><text x="736" y="71" class="tt">A</text>
<path d="M752 66l4 5 8-11" fill="none" stroke="#6a1080" stroke-width="2"/><path d="M775 60l11 7-11 7z" fill="#f00"/>
<!-- combos -->
<rect x="805" y="57" width="246" height="19" fill="#fff"/><rect x="1036" y="58" width="14" height="17" fill="#a8abb0"/><path d="M1040 65h6l-3 3z" fill="#555"/>
<text x="809" y="70" class="s" font-size="12" fill="#111">돋움체</text>
<rect x="1063" y="57" width="46" height="19" fill="#fff"/><rect x="1094" y="58" width="14" height="17" fill="#a8abb0"/><path d="M1098 65h6l-3 3z" fill="#555"/>
<path d="M1122 60v11M1118 67l4 4 4-4M1144 71V60M1140 64l4-4 4 4" stroke="#222" fill="none"/>
<text x="1175" y="72" class="tt" style="font-family:'Liberation Serif',serif;font-size:15px">B</text><text x="1196" y="71" class="tt">I</text><text x="1218" y="71" class="tt">U</text>
<text x="1248" y="69" class="tt" style="fill:#006">A</text><rect x="1241" y="70" width="15" height="4" fill="#000"/><path d="M1264 65h6l-3 3z" fill="#666"/>
<text x="1284" y="69" class="tt" style="fill:#006">A</text><rect x="1277" y="70" width="15" height="4" fill="#fff"/><path d="M1299 65h6l-3 3z" fill="#666"/>
<path d="M1319 60h12M1319 63h8M1319 66h12M1319 69h8M1319 72h12M1342 60h12M1344 63h8M1342 66h12M1344 69h8M1342 72h12M1364 60h12M1368 63h8M1364 66h12M1368 69h8M1364 72h12M1385 60h12M1385 63h12M1385 66h12M1385 69h12M1385 72h12" stroke="#333"/>
<path d="M1416 61h12M1416 64h12M1438 65h12M1438 68h12M1459 69h12M1459 72h12" stroke="#333" stroke-width="1"/>
<text x="1500" y="71" class="tt">B</text><text x="1522" y="71" class="tt">T</text><text x="1544" y="71" class="tt">E</text><text x="1566" y="71" class="tt">V</text>
<text x="1600" y="71" class="tt" style="fill:#999">R</text><text x="1622" y="71" class="tt" style="fill:#f00">R</text><text x="1644" y="71" class="tt">T</text><text x="1666" y="71" class="tt" style="fill:#00f">A</text>

<!-- toolbar2 icons -->
<rect x="12.500" y="80.500" width="20" height="21" fill="#f2c58a" stroke="#e0a860"/><path d="M16 83v15l3.500-3.500 2.500 5 2-1-2.500-5H26z" fill="#111"/>
<use href="#g1" x="44" y="83" width="16" height="16"/><use href="#g2" x="66" y="83" width="16" height="16"/><use href="#g3" x="88" y="83" width="16" height="16"/><use href="#chart" x="111" y="83" width="16" height="16"/><use href="#tabw" x="132" y="83" width="16" height="16"/>
<text x="169" y="96" class="tt" style="font-size:13px" textLength="17" lengthAdjust="spacingAndGlyphs">Aa</text>
<rect x="185.500" y="86.500" width="14" height="9" fill="#fff" stroke="#111"/><text x="192.500" y="94" font-size="7" text-anchor="middle" class="s">Abc</text>
<rect x="207.500" y="86.500" width="14" height="9" fill="#fff" stroke="#111"/><text x="214.500" y="94" font-size="7" text-anchor="middle" class="s">1-23</text>
<rect x="229.500" y="86.500" width="14" height="9" fill="#fff" stroke="#111"/><text x="236.500" y="94" font-size="7" text-anchor="middle" class="s">123</text>
<rect x="251.500" y="86.500" width="14" height="9" fill="#fff" stroke="#111"/><text x="258.500" y="94" font-size="7" text-anchor="middle" class="s">100</text>
<use href="#dd" x="280" y="83" width="16" height="16"/><use href="#ck" x="302" y="83" width="16" height="16"/><use href="#rd" x="324" y="83" width="16" height="16"/>
<rect x="347.500" y="86.500" width="15" height="10" fill="#fff" stroke="#111"/><path d="M350 93h10" stroke="#111" stroke-dasharray="1 2"/>
<text x="384" y="96" class="tt">w</text><use href="#spark" x="398" y="83" width="16" height="16"/><use href="#qr" x="420" y="83" width="16" height="16"/><text x="450" y="96" class="tt">F</text>
<path d="M473 91h14" stroke="#444"/><rect x="495.500" y="87.500" width="13" height="8" fill="none" stroke="#444"/><circle cx="524" cy="91" r="4.500" fill="none" stroke="#444"/><text x="546" y="96" class="tt" style="fill:#444">T</text>
<use href="#tb1" x="568" y="83" width="16" height="16"/><use href="#tb1" x="590" y="83" width="16" height="16"/><use href="#tb1" x="612" y="83" width="16" height="16"/><use href="#tb1" x="634" y="83" width="16" height="16"/><use href="#tb1" x="656" y="83" width="16" height="16"/>
<use href="#tg" x="686" y="83" width="16" height="16"/><use href="#tg" x="708" y="83" width="16" height="16"/><use href="#tg" x="730" y="83" width="16" height="16"/><use href="#tg" x="752" y="83" width="16" height="16"/><use href="#tg" x="774" y="83" width="16" height="16"/>
<use href="#col" x="805" y="83" width="16" height="16"/><use href="#col" x="827" y="83" width="16" height="16"/><use href="#col" x="849" y="83" width="16" height="16"/>
<use href="#mg" x="878" y="83" width="16" height="16"/>
<path d="M911.500 85.500h10v12h-10zM933.500 85.500h10v12h-10zM955.500 85.500h10v12h-10zM977.500 85.500h10v12h-10z" fill="none" stroke="#111"/><path d="M911 85v13M933 85h11M966 85v13M977 98h11" stroke="#00f" stroke-width="1.500" fill="none"/>
<use href="#tl" x="1007" y="83" width="16" height="16"/><use href="#tr" x="1030" y="83" width="16" height="16"/><use href="#tu" x="1052" y="83" width="16" height="16"/><use href="#td" x="1074" y="83" width="16" height="16"/>
<use href="#lgt" x="1104" y="83" width="16" height="16"/><use href="#rgt" x="1125" y="83" width="16" height="16"/><use href="#upa" x="1149" y="83" width="16" height="16"/><use href="#dna" x="1170" y="83" width="16" height="16"/>
<use href="#al1" x="1199" y="83" width="16" height="16"/><use href="#al2" x="1223" y="83" width="16" height="16"/><use href="#al3" x="1244" y="83" width="16" height="16"/><use href="#al4" x="1266" y="83" width="16" height="16"/>
<use href="#al1" x="1295" y="83" width="16" height="16"/><use href="#al2" x="1318" y="83" width="16" height="16"/><use href="#al3" x="1340" y="83" width="16" height="16"/><use href="#al4" x="1362" y="83" width="16" height="16"/>
<use href="#sp1" x="1392" y="83" width="16" height="16"/><use href="#sp1" x="1414" y="83" width="16" height="16"/><use href="#sp1" x="1436" y="83" width="16" height="16"/>
<use href="#sp2" x="1466" y="83" width="16" height="16"/><use href="#sp2" x="1488" y="83" width="16" height="16"/><use href="#sp2" x="1510" y="83" width="16" height="16"/>
<use href="#lr" x="1540" y="83" width="16" height="16"/><use href="#ud" x="1562" y="83" width="16" height="16"/>

<!-- explorer toolbar -->
<use href="#yfold" x="5" y="127" width="16" height="16"/><use href="#yfold" x="35" y="127" width="16" height="16"/><use href="#xred" x="58" y="127" width="16" height="16"/><use href="#cut" x="89" y="127" width="16" height="16"/><use href="#copy" x="110" y="127" width="16" height="16"/><use href="#paste" x="133" y="127" width="16" height="16"/>
<path d="M29.500 129v13M81.500 129v13M155.500 129v13" stroke="#555"/>
<rect x="162.500" y="128.500" width="16" height="16" fill="none" stroke="#777" stroke-dasharray="1 1"/><path d="M166 133a5 5 0 1 0 8 0M174 129v4h-3" fill="none" stroke="#222"/>
<use href="#pm" x="318" y="107" width="12" height="12"/><use href="#cl" x="336" y="107" width="12" height="12"/>
<!-- tree -->
<path d="M30.500 185V1087M49.500 203V327M49.500 356V460M11.500 180v3M15 175.500h7M34 194.500h7M34 346.500h7" stroke="#999" stroke-dasharray="1 1" fill="none"/>
<use href="#folder" x="22" y="167" width="16" height="16"/><use href="#folder" x="41" y="186" width="16" height="16"/><use href="#folder" x="41" y="338" width="16" height="16"/>
<use href="#exm" x="7" y="171" width="9" height="9"/><use href="#exm" x="26" y="190" width="9" height="9"/><use href="#exm" x="26" y="342" width="9" height="9"/>

<!-- tab close / strip -->
<path d="M761 112l8 8M769 112l-8 8" stroke="#555" stroke-width="1.500"/><path d="M1542 114.500h11l-5.500 5z" fill="#555"/>
<!-- scroll arrows -->
<path d="M1338 195l4-4 4 4" stroke="#555" stroke-width="1.500" fill="none"/><path d="M1338 933l4 4 4-4" stroke="#555" stroke-width="1.500" fill="none"/>
<path d="M486 949l-4 3.500 4 3.500M1323 949l4 3.500-4 3.500" stroke="#555" stroke-width="1.500" fill="none"/>

<!-- toolbox icons -->
<use href="#pm" x="1523" y="133" width="12" height="12"/><use href="#cl" x="1540" y="133" width="12" height="12"/>
<path d="M1364 155l10 10M1374 155l-10 10" stroke="#000" stroke-width="2"/><rect x="1384.500" y="157.500" width="12" height="6" fill="#fff" stroke="#111"/>
<path d="M1406.500 153v14M1458.500 153v14" stroke="#555"/><path d="M1421 166v-10M1418 159l3-3 3 3M1443 154v10M1440 161l3 3 3-3" stroke="#000" stroke-width="1.500" fill="none"/>
<path d="M1467 158a6 6 0 0 1 11-2M1479 164a6 6 0 0 1-11 2" stroke="#aaa" fill="none"/>

<!-- property icons -->
<use href="#pm" x="1780" y="107" width="12" height="12"/><use href="#cl" x="1797" y="107" width="12" height="12"/>
<use href="#cats" x="1571" y="131" width="16" height="16"/>
<text x="1597" y="138" font-size="9" font-weight="bold" fill="#36a" text-anchor="middle" class="s">A</text><text x="1597" y="147" font-size="9" font-weight="bold" fill="#a33" text-anchor="middle" class="s">Z</text><path d="M1606.500 131v14M1604 142l2.500 3 2.500-3" stroke="#111" fill="none"/>
<use href="#pages" x="1615" y="131" width="16" height="16"/><use href="#bolt" x="1637" y="131" width="16" height="16"/>
<use href="#exm" x="1571" y="178" width="9" height="9"/><use href="#exp" x="1571" y="235" width="9" height="9"/><use href="#exm" x="1571" y="254" width="9" height="9"/>
<use href="#exm" x="1590" y="273" width="9" height="9"/><use href="#exm" x="1590" y="330" width="9" height="9"/><use href="#exm" x="1590" y="406" width="9" height="9"/><use href="#exm" x="1590" y="463" width="9" height="9"/><use href="#exm" x="1590" y="558" width="9" height="9"/>
<use href="#propi" x="1570" y="1126" width="16" height="16"/><use href="#propi" x="1644" y="1126" width="16" height="16"/>

<!-- output -->
<use href="#pm" x="1526" y="1001" width="12" height="12"/><use href="#cl" x="1543" y="1001" width="12" height="12"/>
<path d="M1544 1033l4-4 4 4" stroke="#aaa" stroke-width="1.500" fill="none"/><path d="M1544 1114l4 4 4-4" stroke="#aaa" stroke-width="1.500" fill="none"/>
<path d="M359.500 1128.500h12v13h-12zM374.500 1128.500h12v13h-12zM390.500 1128.500h12v13h-12zM406.500 1128.500h12v13h-12z" fill="#c9c9c9" stroke="#999"/>
<path d="M368 1132l-4 3 4 3zM383 1132l-4 3 4 3zM394 1132l4 3-4 3zM410 1132l4 3-4 3z" fill="#333"/><path d="M362.500 1131v8M415.500 1131v8" stroke="#333"/>
<!-- resize grip -->
<path d="M1806 1170h7M1809 1166h4M1812 1162h1" stroke="#222" stroke-width="2" stroke-dasharray="2 1"/>
</svg>
</body></html>
